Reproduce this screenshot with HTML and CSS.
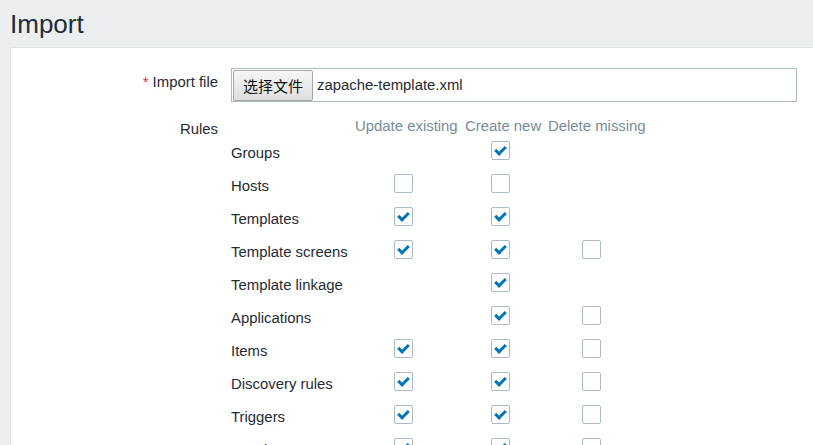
FILE: index.html
```html
<!DOCTYPE html>
<html>
<head>
<meta charset="utf-8">
<link rel="stylesheet" href="styles.css">
</head>
<body>
<header class="page-header"><h1 class="title">Import</h1></header>
<main class="panel">
  <div class="form-row">
    <div class="form-label label-file"><span class="req">*</span> Import file</div>
    <div class="form-field">
      <div class="file-input">
        <span class="file-btn">选择文件</span>
        <span class="file-name">zapache-template.xml</span>
      </div>
    </div>
  </div>
  <div class="form-row rules-row">
    <div class="form-label label-rules">Rules</div>
    <div class="form-field">
      <div class="rules">
        <div class="rh"></div><div class="rh">Update existing</div><div class="rh">Create new</div><div class="rh">Delete missing</div>

        <div class="rl">Groups</div><div class="c c1"></div><div class="c c2"><span class="cb on"></span></div><div class="c c3"></div>
        <div class="rl">Hosts</div><div class="c c1"><span class="cb"></span></div><div class="c c2"><span class="cb"></span></div><div class="c c3"></div>
        <div class="rl">Templates</div><div class="c c1"><span class="cb on"></span></div><div class="c c2"><span class="cb on"></span></div><div class="c c3"></div>
        <div class="rl">Template screens</div><div class="c c1"><span class="cb on"></span></div><div class="c c2"><span class="cb on"></span></div><div class="c c3"><span class="cb"></span></div>
        <div class="rl">Template linkage</div><div class="c c1"></div><div class="c c2"><span class="cb on"></span></div><div class="c c3"></div>
        <div class="rl">Applications</div><div class="c c1"></div><div class="c c2"><span class="cb on"></span></div><div class="c c3"><span class="cb"></span></div>
        <div class="rl">Items</div><div class="c c1"><span class="cb on"></span></div><div class="c c2"><span class="cb on"></span></div><div class="c c3"><span class="cb"></span></div>
        <div class="rl">Discovery rules</div><div class="c c1"><span class="cb on"></span></div><div class="c c2"><span class="cb on"></span></div><div class="c c3"><span class="cb"></span></div>
        <div class="rl">Triggers</div><div class="c c1"><span class="cb on"></span></div><div class="c c2"><span class="cb on"></span></div><div class="c c3"><span class="cb"></span></div>
        <div class="rl">Graphs</div><div class="c c1"><span class="cb on"></span></div><div class="c c2"><span class="cb on"></span></div><div class="c c3"><span class="cb"></span></div>
      </div>
    </div>
  </div>
</main>
</body>
</html>
```
FILE: styles.css
```css
html, body {
  margin: 0;
  padding: 0;
  height: 100%;
  overflow: hidden;
}
body {
  background: #ebeef0;
  font-family: "Liberation Sans", Arial, sans-serif;
  font-size: 14.9px;
  color: #1f2c33;
}
.page-header {
  height: 47px;
  box-sizing: border-box;
  padding: 10px 0 0 10px;
}
.title {
  margin: 0;
  font-size: 26px;
  font-weight: normal;
  line-height: 29px;
  color: #1f2c33;
}
.panel {
  display: block;
  margin: 0 -30px 0 10px;
  background: #fff;
  border-top: 1px solid #dfe4e7;
  border-left: 1px solid #dfe4e7;
  padding-top: 20px;
  min-height: 500px;
}
.form-row {
  display: flex;
  align-items: flex-start;
}
.rules-row {
  margin-top: 16px;
}
.form-label {
  width: 207px;
  flex: none;
  text-align: right;
  padding-right: 13px;
  line-height: 17px;
}
.label-file {
  padding-top: 6px;
}
.label-rules {
  padding-top: 3px;
}
.req {
  color: #e33734;
}
.file-input {
  width: 566px;
  height: 34px;
  box-sizing: border-box;
  border: 1px solid #acbbc2;
  display: flex;
  align-items: center;
  padding-left: 1px;
}
.file-btn {
  width: 80px;
  height: 31px;
  box-sizing: border-box;
  border: 1px solid #a7a7a7;
  border-radius: 2px;
  background: linear-gradient(#f6f6f6, #dedede);
  font-family: "Noto Sans CJK SC", "Liberation Sans", sans-serif;
  font-size: 15px;
  line-height: 29px;
  text-align: center;
  color: #111;
}
.file-name {
  margin-left: 4px;
}
.rules {
  display: grid;
  grid-template-columns: 124px 110px 83px 101px;
  grid-auto-rows: 33px;
  grid-template-rows: 17px;
}
.rh {
  color: #768d99;
  line-height: 17px;
  white-space: nowrap;
}
.rl {
  display: flex;
  align-items: center;
  padding-top: 2px;
  white-space: nowrap;
}
.c {
  display: flex;
  align-items: center;
}
.c1 { padding-left: 39px; }
.c2 { padding-left: 26px; }
.c3 { padding-left: 34px; }
.cb {
  width: 19px;
  height: 19px;
  box-sizing: border-box;
  border: 1px solid #acbbc2;
  border-radius: 2px;
  background: #fff;
  position: relative;
  margin-top: -3px;
}
.cb.on::after {
  content: "";
  position: absolute;
  left: 5px;
  top: 2px;
  width: 4px;
  height: 8px;
  border-right: 3.5px solid #0275b8;
  border-bottom: 3.5px solid #0275b8;
  transform: rotate(45deg);
}
```
